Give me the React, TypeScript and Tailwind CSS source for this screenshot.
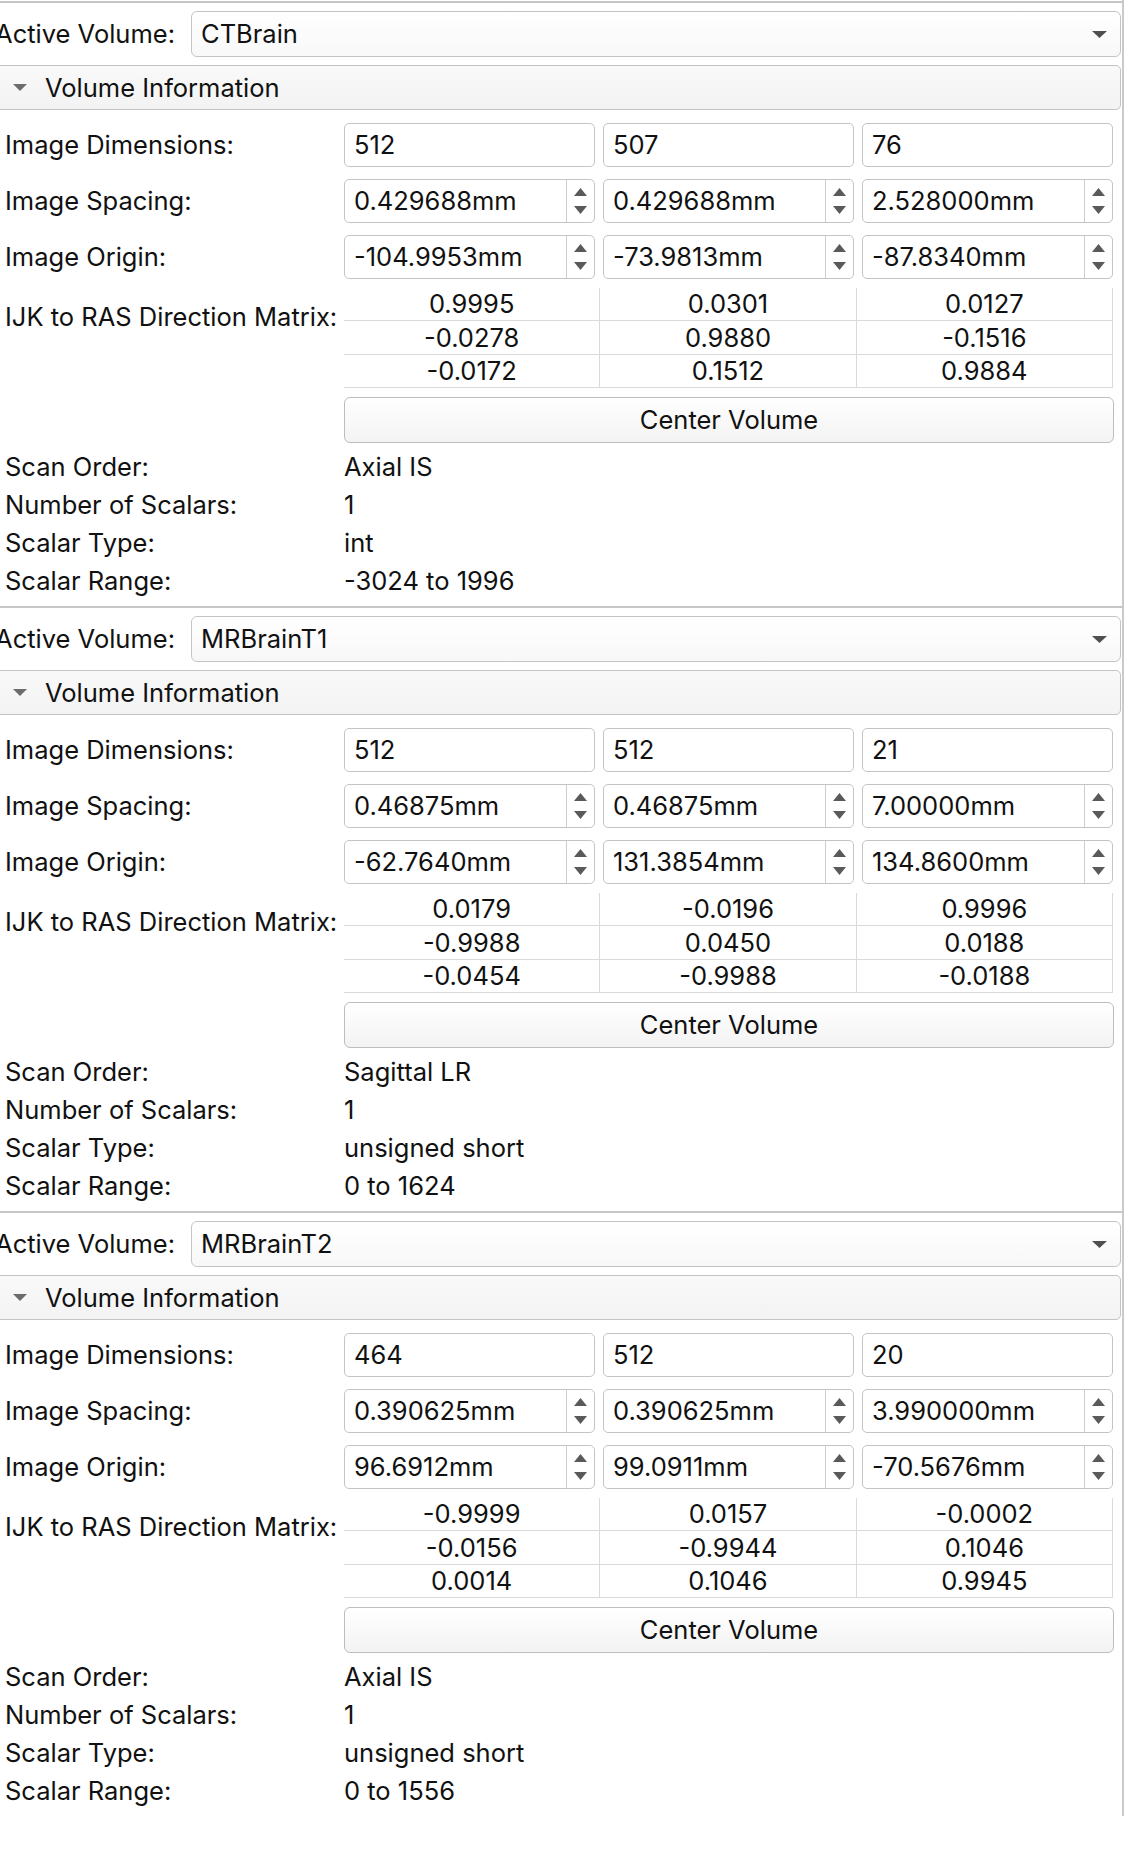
import React from "react";

type Sec = {
  name: string;
  dims: string[];
  spacing: string[];
  origin: string[];
  matrix: string[][];
  scanOrder: string;
  numScalars: string;
  scalarType: string;
  scalarRange: string;
};

const sections: Sec[] = [
  {
    name: "CTBrain",
    dims: ["512", "507", "76"],
    spacing: ["0.429688mm", "0.429688mm", "2.528000mm"],
    origin: ["-104.9953mm", "-73.9813mm", "-87.8340mm"],
    matrix: [
      ["0.9995", "0.0301", "0.0127"],
      ["-0.0278", "0.9880", "-0.1516"],
      ["-0.0172", "0.1512", "0.9884"],
    ],
    scanOrder: "Axial IS",
    numScalars: "1",
    scalarType: "int",
    scalarRange: "-3024 to 1996",
  },
  {
    name: "MRBrainT1",
    dims: ["512", "512", "21"],
    spacing: ["0.46875mm", "0.46875mm", "7.00000mm"],
    origin: ["-62.7640mm", "131.3854mm", "134.8600mm"],
    matrix: [
      ["0.0179", "-0.0196", "0.9996"],
      ["-0.9988", "0.0450", "0.0188"],
      ["-0.0454", "-0.9988", "-0.0188"],
    ],
    scanOrder: "Sagittal LR",
    numScalars: "1",
    scalarType: "unsigned short",
    scalarRange: "0 to 1624",
  },
  {
    name: "MRBrainT2",
    dims: ["464", "512", "20"],
    spacing: ["0.390625mm", "0.390625mm", "3.990000mm"],
    origin: ["96.6912mm", "99.0911mm", "-70.5676mm"],
    matrix: [
      ["-0.9999", "0.0157", "-0.0002"],
      ["-0.0156", "-0.9944", "0.1046"],
      ["0.0014", "0.1046", "0.9945"],
    ],
    scanOrder: "Axial IS",
    numScalars: "1",
    scalarType: "unsigned short",
    scalarRange: "0 to 1556",
  },
];

function DownTri({ w, h, color }: { w: number; h: number; color: string }) {
  return (
    <svg width={w} height={h} viewBox={`0 0 ${w} ${h}`} className="block shrink-0">
      <polygon points={`0,0 ${w},0 ${w / 2},${h}`} fill={color} />
    </svg>
  );
}

function UpTri({ w, h, color }: { w: number; h: number; color: string }) {
  return (
    <svg width={w} height={h} viewBox={`0 0 ${w} ${h}`} className="block shrink-0">
      <polygon points={`${w / 2},0 ${w},${h} 0,${h}`} fill={color} />
    </svg>
  );
}

function PlainInput({ value }: { value: string }) {
  return (
    <div className="flex h-[44px] min-w-0 flex-1 items-center rounded-[5px] border border-[#c4c4c4] bg-white pl-[9px]">
      {value}
    </div>
  );
}

function SpinInput({ value }: { value: string }) {
  return (
    <div className="flex h-[44px] min-w-0 flex-1 items-stretch rounded-[5px] border border-[#c4c4c4] bg-white">
      <div className="flex min-w-0 flex-1 items-center whitespace-nowrap pl-[9px]">{value}</div>
      <div className="flex w-[28px] shrink-0 flex-col items-center justify-center gap-[10px] border-l border-[#cdcdcd]">
        <UpTri w={13} h={8} color="#5a5a5a" />
        <DownTri w={13} h={8} color="#5a5a5a" />
      </div>
    </div>
  );
}

function Row({ label, children, className = "" }: { label: string; children: React.ReactNode; className?: string }) {
  return (
    <div className={`flex items-center ${className}`}>
      <div className="w-[339px] shrink-0 whitespace-nowrap">{label}</div>
      <div className="flex w-[769px] shrink-0 gap-[8px]">{children}</div>
    </div>
  );
}

function Section({ s }: { s: Sec }) {
  return (
    <div className="flex h-[605px] flex-col border-t-2 border-[#c6c6c6] pl-[5px]">
      {/* Active volume combobox */}
      <div className="ml-[-5px] mt-[8px] flex h-[46px] items-center">
        <div className="flex w-[175px] shrink-0 justify-end">
          <span className="whitespace-nowrap">Active Volume:</span>
        </div>
        <div className="ml-[16px] mr-[1px] flex h-full flex-1 items-center justify-between rounded-[6px] border border-[#c4c4c4] bg-gradient-to-b from-white to-[#f8f8f8] pl-[9px] pr-[13px]">
          <span>{s.name}</span>
          <DownTri w={15} h={7} color="#4f4f4f" />
        </div>
      </div>

      {/* Collapsible header */}
      <div className="ml-[-11px] mr-[1px] mt-[8px] flex h-[45px] items-center rounded-[5px] border border-[#c4c4c4] bg-gradient-to-b from-[#f9f9f9] to-[#f3f3f3] pl-[18px]">
        <DownTri w={14} h={7} color="#6c6c6c" />
        <span className="ml-[18px]">Volume Information</span>
      </div>

      <Row label="Image Dimensions:" className="mt-[13px]">
        {s.dims.map((d, i) => (
          <PlainInput key={i} value={d} />
        ))}
      </Row>
      <Row label="Image Spacing:" className="mt-[12px]">
        {s.spacing.map((d, i) => (
          <SpinInput key={i} value={d} />
        ))}
      </Row>
      <Row label="Image Origin:" className="mt-[12px]">
        {s.origin.map((d, i) => (
          <SpinInput key={i} value={d} />
        ))}
      </Row>

      {/* Matrix */}
      <div className="mt-[9px] flex items-start">
        <div className="mt-[10px] flex h-[38px] w-[339px] shrink-0 items-center whitespace-nowrap">
          IJK to RAS Direction Matrix:
        </div>
        <div className="flex w-[769px] shrink-0 flex-col">
          {s.matrix.map((row, ri) => (
            <div key={ri} className={`grid grid-cols-3 ${ri === 1 ? "h-[34px]" : "h-[33px]"}`}>
              {row.map((v, ci) => (
                <div
                  key={ci}
                  className="flex items-center justify-center border-b border-r border-[#dadada]"
                >
                  {v}
                </div>
              ))}
            </div>
          ))}
        </div>
      </div>

      {/* Center Volume */}
      <div className="mt-[9px] flex">
        <div className="w-[339px] shrink-0" />
        <div className="flex h-[46px] w-[770px] shrink-0 items-center justify-center rounded-[6px] border border-[#bdbdbd] bg-gradient-to-b from-white to-[#f3f3f3]">
          Center Volume
        </div>
      </div>

      {/* Info rows */}
      <div className="mt-[5px] flex flex-col">
        {[
          ["Scan Order:", s.scanOrder],
          ["Number of Scalars:", s.numScalars],
          ["Scalar Type:", s.scalarType],
          ["Scalar Range:", s.scalarRange],
        ].map(([l, v]) => (
          <div key={l} className="flex h-[38px] items-center">
            <div className="w-[339px] shrink-0 whitespace-nowrap">{l}</div>
            <div className="whitespace-nowrap">{v}</div>
          </div>
        ))}
      </div>
    </div>
  );
}

export default function App() {
  return (
    <div className="min-h-screen w-full overflow-hidden bg-white font-['Inter','Liberation_Sans',sans-serif] text-[25.5px] leading-none text-[#111111]">
      <div className="w-[1124px] border-r-2 border-[#cacaca] pt-[1px]">
        {sections.map((s) => (
          <Section key={s.name} s={s} />
        ))}
      </div>
    </div>
  );
}
